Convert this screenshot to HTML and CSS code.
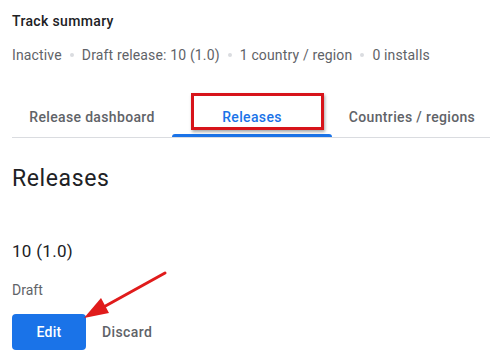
FILE: index.html
```html
<!DOCTYPE html>
<html lang="en">
<head>
    <meta charset="UTF-8">
    <meta name="viewport" content="width=device-width, initial-scale=1.0">
    <title>Track summary</title>
    <link rel="stylesheet" href="styles.css">
</head>
<body>
    <div class="page">
        <div class="summary-title">Track summary</div>
        <div class="summary-meta">
            <span>Inactive</span><span class="dot"></span>
            <span>Draft release: 10 (1.0)</span><span class="dot"></span>
            <span>1 country / region</span><span class="dot"></span>
            <span>0 installs</span>
        </div>

        <div class="tabs">
            <div class="tab">Release dashboard</div>
            <div class="tab active">Releases</div>
            <div class="tab">Countries / regions</div>
        </div>

        <h2 class="section-title">Releases</h2>

        <div class="release">
            <div class="release-name">10 (1.0)</div>
            <div class="release-status">Draft</div>
            <div class="actions">
                <button class="btn-primary">Edit</button>
                <button class="btn-text">Discard</button>
            </div>
        </div>
    </div>

    <!-- annotations -->
    <div class="highlight"></div>
    <svg class="arrow" width="490" height="356" viewBox="0 0 490 356">
        <line x1="165" y1="273" x2="100" y2="309" stroke="#e01b1b" stroke-width="3" stroke-linecap="round"/>
        <polygon points="84,318 101,298 109,313" fill="#e01b1b"/>
    </svg>
</body>
</html>
```

FILE: styles.css
```css
body {
    margin: 0;
    padding: 0;
    background: #fff;
    font-family: Roboto, "Noto Sans", Arial, sans-serif;
    color: #202124;
}
.page {
    padding: 0 0 0 12px;
}
.summary-title {
    font-size: 14px;
    font-weight: 500;
    line-height: 20px;
    padding-top: 11px;
    letter-spacing: 0.35px;
}
.summary-meta {
    display: flex;
    align-items: center;
    font-size: 14px;
    color: #5f6368;
    line-height: 20px;
    margin-top: 14px;
    white-space: nowrap;
    letter-spacing: 0.15px;
}
.dot {
    width: 4px;
    height: 4px;
    border-radius: 50%;
    background: #dadce0;
    margin: 0 8px;
}
.tabs {
    display: flex;
    margin-top: 32px;
    border-bottom: 1px solid #dadce0;
}
.tab {
    position: relative;
    width: 160px;
    flex: none;
    height: 40px;
    line-height: 40px;
    text-align: center;
    font-size: 14px;
    font-weight: 500;
    color: #5f6368;
    letter-spacing: 0.35px;
}
.tab.active {
    color: #1a73e8;
}
.tab.active::after {
    content: "";
    position: absolute;
    left: 0;
    right: 0;
    bottom: 0;
    height: 3px;
    background: #1a73e8;
    border-radius: 3px 3px 0 0;
}
.section-title {
    margin: 26px 0 0;
    font-size: 23px;
    font-weight: 400;
    line-height: 30px;
    letter-spacing: 0.6px;
}
.release {
    margin-top: 45px;
}
.release-name {
    font-size: 17px;
    line-height: 24px;
    letter-spacing: 0.3px;
}
.release-status {
    font-size: 14px;
    color: #5f6368;
    line-height: 20px;
    margin-top: 17px;
}
.actions {
    display: flex;
    align-items: center;
    gap: 16px;
    margin-top: 14px;
}
.btn-primary {
    width: 74px;
    height: 36px;
    border: none;
    border-radius: 4px;
    background: #1a73e8;
    color: #fff;
    font-family: inherit;
    font-size: 14px;
    font-weight: 500;
    letter-spacing: 0.3px;
}
.btn-text {
    border: none;
    background: none;
    color: #5f6368;
    font-family: inherit;
    font-size: 14px;
    font-weight: 500;
    padding: 0;
    letter-spacing: 0.4px;
}
.highlight {
    position: absolute;
    left: 191px;
    top: 93px;
    width: 127px;
    height: 31px;
    border: 3px solid #d7141a;
    box-shadow: 1px 2px 3px rgba(0, 0, 0, 0.35);
}
.arrow {
    position: absolute;
    left: 0;
    top: 0;
    pointer-events: none;
}
```
